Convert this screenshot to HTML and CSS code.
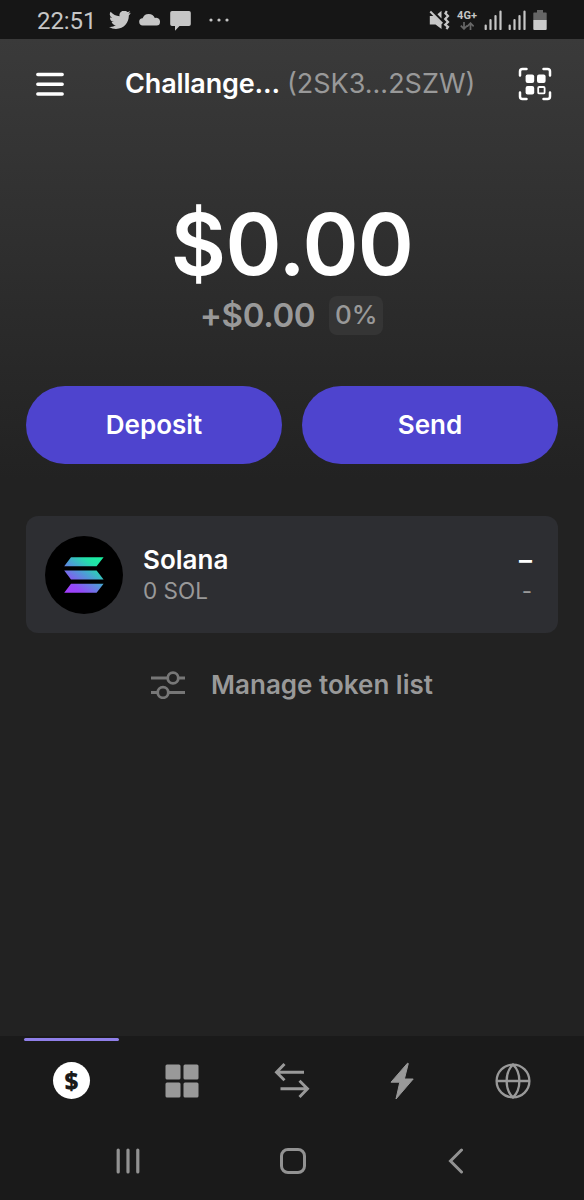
FILE: index.html
```html
<!DOCTYPE html>
<html lang="en">
<head>
<meta charset="utf-8">
<title>Wallet</title>
<link rel="stylesheet" href="styles.css">
</head>
<body>
<div class="phone">
  <header class="status">
    <span class="time">22:51</span>
    <svg class="s-bird" width="22" height="18" viewBox="1 3 22.4 18.4"><path fill="#c6c6c6" d="M23.6 4.900a9.900 9.900 0 0 1-2.800.8 4.900 4.900 0 0 0 2.200-2.700 9.900 9.900 0 0 1-3.100 1.200 4.900 4.900 0 0 0-8.400 4.500A14 14 0 0 1 1.700 3.900a4.900 4.900 0 0 0 1.500 6.600 4.900 4.900 0 0 1-2.200-.6v.1a4.900 4.900 0 0 0 4 4.800 5 5 0 0 1-2.200.1 4.900 4.900 0 0 0 4.600 3.400A9.900 9.900 0 0 1 0 20.300a14 14 0 0 0 7.500 2.200c9.100 0 14-7.500 14-14v-.6a10 10 0 0 0 2.100-3z" transform="translate(1 .2) scale(.94)"/></svg>
    <svg class="s-cloud" width="22" height="12" viewBox="0 0 22 12"><path fill="#c6c6c6" d="M4 11.500a3.600 3.600 0 0 1-.4-7.200A6.600 6.600 0 0 1 15.800 4a3.900 3.900 0 0 1 5.200 4 3.500 3.500 0 0 1-3.600 3.500z"/></svg>
    <svg class="s-msg" width="21" height="20" viewBox="0 0 21 20"><path fill="#c6c6c6" d="M2 0h17a1.800 1.800 0 0 1 1.800 1.800v11.400A1.800 1.800 0 0 1 19 15H9.500L5 19.800V15H2A1.800 1.800 0 0 1 .2 13.200V1.800A1.800 1.800 0 0 1 2 0z"/></svg>
    <svg class="s-dots" width="20" height="4" viewBox="0 0 20 4" fill="#c6c6c6"><circle cx="2" cy="2" r="1.600"/><circle cx="10" cy="2" r="1.600"/><circle cx="18" cy="2" r="1.600"/></svg>
    <svg class="s-mute" width="21" height="20" viewBox="0 0 21 20"><path fill="#c6c6c6" d="M.8 6h4L12.500 13.500V19L6.500 14.500H.8zM8.400 4.300 12.500.8v7.600z"/><path d="m1.300 1.500 12 12" stroke="#c6c6c6" stroke-width="2"/><path d="m17.800 1-1.400 2.400L19 6l-2.800 3L19 12l-2.800 2.700L19 17l-1.600 2" fill="none" stroke="#c6c6c6" stroke-width="2.200"/></svg>
    <div class="net"><span>4G+</span><svg width="14" height="8" viewBox="0 0 14 8" fill="none" stroke="#666" stroke-width="1.700"><path d="M4 0v6.500M.8 3.700 4 6.900l3.200-3.200M10.500 8V1.500M7.300 4.300l3.200-3.200 3.200 3.200"/></svg></div>
    <svg class="s-sig" width="18" height="20" viewBox="0 0 18 20"><path d="M1.700 15.500V19M6.500 10v9M11.500 6v13M16.500 1.500V19" stroke="#c6c6c6" stroke-width="2.200" stroke-linecap="round"/></svg>
    <svg class="s-sig2" width="18" height="20" viewBox="0 0 18 20"><path d="M1.700 15.500V19M6.500 10v9M11.500 6v13M16.500 1.500V19" stroke="#c6c6c6" stroke-width="2.200" stroke-linecap="round"/></svg>
    <svg class="s-bat" width="14" height="20" viewBox="0 0 14 20"><path d="M4 0h6v2.500h3a.7.7 0 0 1 .7.700V10H.3V3.200A.7.7 0 0 1 1 2.500h3z" fill="#666"/><path d="M.3 10h13.400v9a1 1 0 0 1-1 1H1.300a1 1 0 0 1-1-1z" fill="#cbcbcb"/></svg>
  </header>

  <main class="wallet">
    <div class="topbar">
      <svg width="28" height="24" viewBox="0 0 28 24"><path d="M1.800 2.500h24.400M1.800 12.300h24.400M1.800 22h24.400" stroke="#fff" stroke-width="3.400" stroke-linecap="round"/></svg>
      <h1 class="account"><span class="name">Challange...</span><span class="address">(2SK3...2SZW)</span></h1>
      <svg width="34" height="34" viewBox="0 0 34 34"><path d="M2 8.500V4.500A2.500 2.500 0 0 1 4.500 2h4M25.500 2h4A2.500 2.500 0 0 1 32 4.500v4M32 25.500v4a2.500 2.500 0 0 1-2.500 2.500h-4M8.500 32h-4A2.500 2.500 0 0 1 2 29.500v-4" fill="none" stroke="#fff" stroke-width="2.500" stroke-linecap="round"/><g fill="#fff"><rect x="7.600" y="7.600" width="8.600" height="8.400" rx="2"/><rect x="19" y="7.600" width="8.600" height="8.400" rx="2"/><rect x="7.600" y="19" width="8.600" height="8.400" rx="2"/></g><rect x="20.200" y="20" width="6.400" height="6.400" rx="1" fill="none" stroke="#fff" stroke-width="1.800"/></svg>
    </div>
    <div class="balance">$0.00</div>
    <div class="change"><span class="delta">+$0.00</span><span class="percent">0%</span></div>
    <div class="actions">
      <button class="action">Deposit</button>
      <button class="action">Send</button>
    </div>
    <section class="token">
      <svg class="logo" width="78" height="78" viewBox="0 0 78 78">
        <defs><linearGradient id="sol" gradientUnits="userSpaceOnUse" x1="26" y1="60" x2="54" y2="21"><stop offset="0" stop-color="#a43cfb"/><stop offset=".2" stop-color="#9349f8"/><stop offset=".55" stop-color="#4c9fd5"/><stop offset=".8" stop-color="#23dfaa"/><stop offset="1" stop-color="#19f0a0"/></linearGradient></defs>
        <circle cx="39" cy="39" r="39" fill="#000"/>
        <path fill="url(#sol)" d="M26 21.200h32.600l-7 9H19.200zM19.200 34.500h32.400l7 9H26zM26 47.800h32.600l-7 9H19.200z"/>
      </svg>
      <div class="token-name"><strong>Solana</strong><span>0 SOL</span></div>
      <div class="token-value"><strong>–</strong><span>-</span></div>
    </section>
    <div class="manage">
      <svg width="34" height="28" viewBox="0 0 34 28" fill="none" stroke="#777" stroke-width="2.800"><path d="M0 7h16M27 7h7M0 21.500h6M17.500 21.500H34"/><circle cx="22" cy="7" r="5.300"/><circle cx="12" cy="21.500" r="5.300"/></svg>
      <span>Manage token list</span>
    </div>
  </main>

  <nav class="tabs">
    <div class="tab active"><span class="coin">$</span></div>
    <div class="tab"><svg width="34" height="34" viewBox="0 0 34 34" fill="#999"><rect x=".5" y=".5" width="15" height="15" rx="1.500"/><rect x="18.500" y=".5" width="15" height="15" rx="1.500"/><rect x=".5" y="18.500" width="15" height="15" rx="1.500"/><rect x="18.500" y="18.500" width="15" height="15" rx="1.500"/></svg></div>
    <div class="tab"><svg width="36" height="36" viewBox="0 0 36 36" fill="none" stroke="#999" stroke-width="2.900"><path d="M30 9.300H3M10.500 1 2.500 9.300l8 8M6.500 25.700h27M25.500 17.700l8 8-8 8.200"/></svg></div>
    <div class="tab"><svg width="24" height="38" viewBox="0 0 24 38"><path d="M17.500 1.200 1 20.200h8.800L6 37 23.200 17h-8.800L18.300 1.500z" fill="#999" stroke="#999" stroke-width="1" stroke-linejoin="round"/></svg></div>
    <div class="tab"><svg width="36" height="36" viewBox="0 0 36 36" fill="none" stroke="#999" stroke-width="2.300"><circle cx="18" cy="18" r="16.400"/><path d="M1.600 18h32.800M18 1.600C9.500 9.500 9.500 26.500 18 34.400 26.500 26.500 26.500 9.500 18 1.600z"/></svg></div>
  </nav>
  <footer class="system">
    <svg width="24" height="26" viewBox="0 0 24 26"><path d="M2.200 2v22M12 2v22M21.800 2v22" stroke="#929292" stroke-width="3.200" stroke-linecap="round"/></svg>
    <svg width="26" height="26" viewBox="0 0 26 26"><rect x="1.500" y="1.500" width="23" height="23" rx="6.500" fill="none" stroke="#929292" stroke-width="3"/></svg>
    <svg width="16" height="26" viewBox="0 0 16 26"><path d="M13.500 2 2.500 13l11 11" fill="none" stroke="#929292" stroke-width="3" stroke-linecap="round"/></svg>
  </footer>
</div>
</body>
</html>
```
FILE: styles.css
```css
* { box-sizing: border-box; }
body { margin: 0; background: #1a1a1a; font-family: Inter, "Liberation Sans", sans-serif; color: #fff; }
svg { display: block; flex: none; }
.phone { width: 584px; height: 1200px; display: flex; flex-direction: column; overflow: hidden; }

.status { height: 39px; flex: none; display: flex; align-items: center; padding: 2px 37px 0; background: #161616; }
.time { font: 24px/30px Roboto, sans-serif; width: 72px; color: #c6c6c6; letter-spacing: -.1px; }
.s-cloud { margin-left: 8px; }
.s-bird, .s-cloud { margin-bottom: 1px; }
.s-msg { margin: 1px 0 0 9px; }
.s-dots { margin: 0 0 2px 18px; }
.s-mute { margin-left: auto; }
.net { width: 20px; height: 20px; margin: 1px 0 0 7px; display: flex; flex-direction: column; align-items: center; gap: 2px; font: 700 11px/9px Roboto, sans-serif; color: #c6c6c6; }
.s-sig { margin-left: 7px; }
.s-sig2 { margin-left: 6px; }
.s-bat { margin-left: 7px; }
.s-mute, .s-sig, .s-sig2, .s-bat { margin-bottom: 1px; }

.wallet { flex: 1; padding: 0 26px; background: linear-gradient(#3a3a3a 0, #222 440px); }
.topbar { height: 90px; display: flex; align-items: center; padding: 0 6px 0 10px; }
.account { margin: 0 auto 0 61px; display: flex; gap: 7px; font-size: 27px; line-height: 34px; white-space: nowrap; }
.name { font-weight: 600; letter-spacing: -.15px; }
.address { font-weight: 400; color: #999; }
.balance { margin-top: 64px; text-align: center; font-size: 85px; line-height: 104px; font-weight: 600; letter-spacing: -.7px; }
.change { height: 40px; margin-top: -2px; padding-right: 1px; display: flex; justify-content: center; align-items: center; gap: 14px; color: #999; }
.delta { font-size: 33px; font-weight: 600; letter-spacing: -.35px; }
.percent { width: 54px; height: 39px; border-radius: 8px; background: #353535; text-align: center; font-size: 26px; line-height: 38px; font-weight: 500; }
.actions { display: flex; gap: 20px; margin-top: 51px; }
.action { flex: 1; height: 78px; padding: 0 0 1px; border: 0; border-radius: 39px; background: #4e44ce; color: #fff; font: 600 26px/32px Inter, sans-serif; }
.token { height: 117px; margin-top: 52px; padding: 0 26px 0 19px; display: flex; align-items: center; border-radius: 12px; background: #2d2e32; }
.token-name, .token-value { display: flex; flex-direction: column; gap: 1px; padding-top: 2px; line-height: 30px; }
.token-name { margin-left: 20px; }
.token-value { margin-left: auto; align-items: flex-end; }
.token strong { font-size: 26px; font-weight: 600; }
.token span { font-size: 22.5px; color: #999; }
.manage { margin-top: 35px; display: flex; align-items: center; justify-content: center; gap: 26px; font-size: 26px; line-height: 34px; font-weight: 600; color: #999; }

.tabs { height: 90px; flex: none; display: flex; justify-content: space-between; padding: 0 24px; background: #1a1a1a; }
.tab { width: 95px; display: flex; align-items: center; justify-content: center; }
.active { flex-direction: column; justify-content: flex-start; gap: 21px; padding-top: 2px; }
.active::before { content: ""; width: 95px; height: 3px; border-radius: 2px; background: #8f7fe8; }
.coin { width: 37px; height: 37px; border-radius: 50%; background: #fff; color: #1a1a1a; text-align: center; font: 800 24px/37px "Open Sans", sans-serif; }
.system { height: 74px; flex: none; display: flex; align-items: center; justify-content: space-between; padding: 0 120px 4px 116px; background: #1a1a1a; }
.system svg:nth-child(2) { margin-right: 3px; }
```
